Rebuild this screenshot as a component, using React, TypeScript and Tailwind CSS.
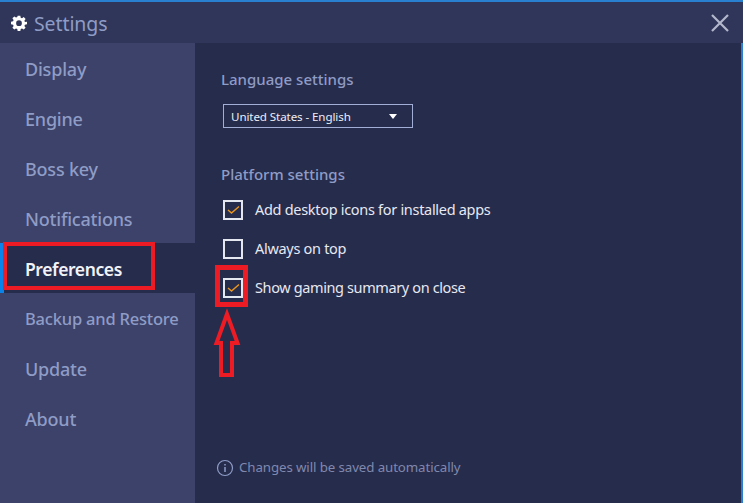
const FONT = "font-['Noto_Sans','Open_Sans',sans-serif]";

function Check({ checked }: { checked?: boolean }) {
  return (
    <div className="w-5 h-5 border-2 border-[#e4e6f0] flex items-center justify-center shrink-0">
      {checked && (
        <svg width="13" height="10" viewBox="0 0 13 10" fill="none">
          <path d="M1 5 L4.5 8 L12 1.5" stroke="#e8951f" strokeWidth="1.5" />
        </svg>
      )}
    </div>
  );
}

function Row({ checked, label, tight }: { checked?: boolean; label: string; tight?: boolean }) {
  return (
    <div className="h-[39px] flex items-center gap-[12px] pl-[2px]">
      <Check checked={checked} />
      <span className={tight ? "text-[14.5px] text-[#e6e8f2] tracking-[-0.38px]" : "text-[14.5px] text-[#e6e8f2] tracking-[-0.3px]"}>{label}</span>
    </div>
  );
}

const items = ["Display", "Engine", "Boss key", "Notifications", "Preferences", "Backup and Restore", "Update", "About"];

export default function App() {
  return (
    <div className={`relative w-[743px] h-[503px] overflow-hidden bg-[#262c4c] flex flex-col ${FONT}`}>
      <div className="h-[2px] bg-[#2a80d0] shrink-0" />
      <div className="h-[41px] bg-[#2f3659] flex items-center justify-between pl-[11px] pr-[13px] shrink-0">
        <div className="flex items-center gap-[7px]">
          <svg width="16" height="16" viewBox="0 0 24 24" fill="#fff">
            <path fillRule="evenodd" d="M10 1h4l.6 3.1 1.9.8 2.6-1.8 2.8 2.8-1.8 2.6.8 1.9L24 10v4l-3.1.6-.8 1.9 1.8 2.6-2.8 2.8-2.6-1.8-1.9.8L14 24h-4l-.6-3.1-1.9-.8-2.6 1.8-2.8-2.8 1.8-2.6-.8-1.9L0 14v-4l3.1-.6.8-1.9-1.8-2.6 2.8-2.8 2.6 1.8 1.9-.8L10 1zm2 7a4.3 4.3 0 1 0 0 8.6A4.3 4.3 0 0 0 12 8z" />
          </svg>
          <span className="mt-[3px] text-[19.5px] text-[#8f9cc6] tracking-[-0.1px]">Settings</span>
        </div>
        <svg width="20" height="20" viewBox="0 0 20 20" stroke="#b4b8cc" strokeWidth="2.2">
          <path d="M2 2 L18 18 M18 2 L2 18" />
        </svg>
      </div>
      <div className="flex-1 flex min-h-0">
        <div className="w-[195px] bg-[#3c4269] shrink-0">
          {items.map((t) => {
            const active = t === "Preferences";
            return (
              <div
                key={t}
                className={
                  active
                    ? "h-[50px] pt-[2px] flex items-center pl-[21px] bg-[#262c4c] border-l-4 border-[#0a84e8] text-[#f2f3f8] font-semibold text-[17.5px] tracking-[-0.4px]"
                    : t === "Backup and Restore"
                    ? "h-[50px] pt-[2px] flex items-center pl-[25px] text-[#8f9cc6] font-medium text-[16.5px] tracking-[-0.2px]"
                    : "h-[50px] pt-[2px] flex items-center pl-[25px] text-[#8f9cc6] font-medium text-[18px] tracking-[-0.2px]"
                }
              >
                {t}
              </div>
            );
          })}
        </div>
        <div className="flex-1 flex flex-col pl-[26px] relative">
          <div className="mt-[24px] text-[15px] font-medium text-[#8f9cc6] leading-[24px]">Language settings</div>
          <div className="mt-[13px] ml-[2px] w-[190px] h-[24px] border border-[#a3aed6] flex items-center justify-between pl-[7px] pr-[15px]">
            <span className="text-[11.6px] mt-[1px] text-[#eceef6] tracking-[-0.1px]">United States - English</span>
            <svg width="8" height="5" viewBox="0 0 8 5" fill="#fff"><path d="M0 0H8L4 5Z" /></svg>
          </div>
          <div className="mt-[34px] text-[15px] font-medium text-[#8f9cc6] leading-[24px]">Platform settings</div>
          <div className="mt-[4px] flex flex-col">
            <Row checked label="Add desktop icons for installed apps" />
            <Row label="Always on top" />
            <Row checked tight label="Show gaming summary on close" />
          </div>
          <div className="mt-auto mb-[25px] -ml-[5px] flex items-center gap-[5px]">
            <svg width="18" height="18" viewBox="0 0 18 18" fill="none" stroke="#8f9cc6" strokeWidth="1.2">
              <circle cx="9" cy="9" r="7.5" />
              <path d="M9 8v5M9 5v1.6" strokeWidth="1.5" />
            </svg>
            <span className="text-[13.3px] text-[#8088ae] tracking-[-0.1px]">Changes will be saved automatically</span>
          </div>
        </div>
        <div className="w-[2px] bg-[#2a80d0] shrink-0" />
      </div>

      {/* annotations */}
      <div className="absolute left-[3px] top-[242px] w-[152px] h-[48px] border-[4px] border-[#ed1c24]" />
      <div className="absolute left-[215px] top-[265px] w-[33px] h-[42px] border-[5px] border-[#ed1c24]" />
      <svg className="absolute left-[212px] top-[307px]" width="30" height="72" viewBox="0 0 30 72" fill="none" stroke="#ed1c24" strokeWidth="4">
        <path d="M15 7 L4.5 36 H9 V68 H20 V36 H25.5 Z" />
      </svg>
    </div>
  );
}
